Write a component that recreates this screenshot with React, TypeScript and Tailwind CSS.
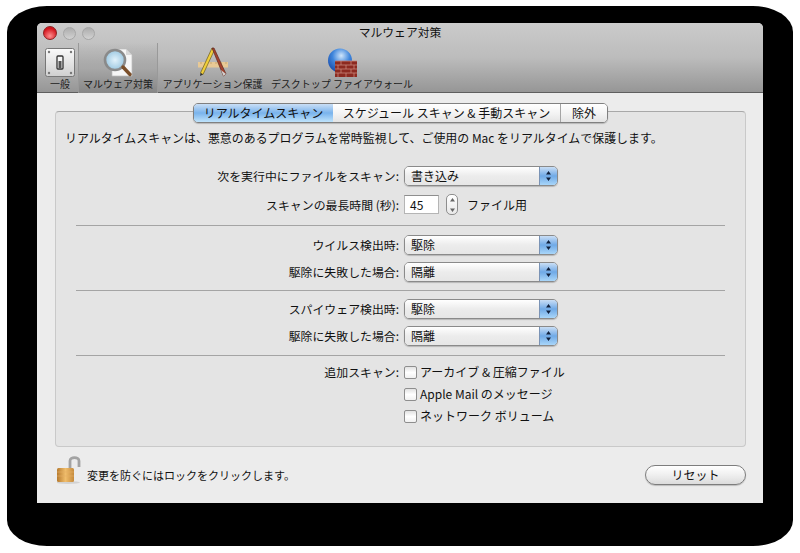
const jp = "font-['Noto_Sans_CJK_JP',sans-serif]";

function ToolbarItem({ label, width, active, children }: { label: string; width: string; active?: boolean; children: React.ReactNode }) {
  return (
    <div
      className={`flex flex-col items-center ${width} ${
        active
          ? 'mt-[20px] h-[50px] pt-[4px] bg-gradient-to-b from-transparent via-[#a8a8a8] to-[#868686] border-x border-[#999999]'
          : 'h-[70px] pt-[24px]'
      }`}
    >
      <div className="h-[31px] flex items-center justify-center">{children}</div>
      <span className="text-[10px] leading-[12px] whitespace-nowrap text-[#1c1c1c]">{label}</span>
    </div>
  );
}

function GeneralIcon() {
  return (
    <svg width="30" height="30" viewBox="0 0 30 30">
      <defs>
        <linearGradient id="plate" x1="0" y1="0" x2="0" y2="1">
          <stop offset="0" stopColor="#fafafa" />
          <stop offset="1" stopColor="#cfcfcf" />
        </linearGradient>
      </defs>
      <rect x="0.5" y="0.5" width="29" height="28" rx="2" fill="url(#plate)" stroke="#777" />
      <circle cx="4" cy="4" r="1.2" fill="#777" />
      <circle cx="26" cy="4" r="1.2" fill="#777" />
      <circle cx="4" cy="25" r="1.2" fill="#777" />
      <circle cx="26" cy="25" r="1.2" fill="#777" />
      <rect x="12" y="8" width="6" height="13" rx="1" fill="#f4f4f4" stroke="#333" strokeWidth="1.3" />
      <rect x="13.5" y="13" width="3" height="7" fill="#555" />
    </svg>
  );
}

function ScanIcon() {
  return (
    <svg width="32" height="31" viewBox="0 0 32 31">
      <defs>
        <radialGradient id="lens" cx="0.5" cy="0.5" r="0.6">
          <stop offset="0" stopColor="#e2f2fb" />
          <stop offset="1" stopColor="#8fc0dc" />
        </radialGradient>
      </defs>
      <path d="M10 2 H24 L30 8 V29 H10 Z" fill="#f6f6f6" stroke="#bbb" strokeWidth="0.7" />
      <path d="M24 2 V8 H30 Z" fill="#d8d8d8" />
      <circle cx="13" cy="13" r="10" fill="url(#lens)" stroke="#8a8a8a" strokeWidth="2.6" />
      <path d="M21 20 L28 27.5" stroke="#7b4f2a" strokeWidth="3.4" strokeLinecap="round" />
    </svg>
  );
}

function AppIcon() {
  return (
    <svg width="32" height="31" viewBox="0 0 32 31">
      <rect x="1" y="15" width="30" height="5.5" fill="#e8c995" />
      <path d="M4 15 V17 M9 15 V17 M14 15 V17 M19 15 V17 M24 15 V17 M29 15 V17" stroke="#b4925a" strokeWidth="0.6" />
      <path d="M15 1 L3.5 26 L6 27.5 L17 4 Z" fill="#f1cf3a" stroke="#6b5a1c" strokeWidth="0.7" />
      <path d="M3.5 26 L3 29 L6 27.5 Z" fill="#333" />
      <path d="M15 1 L17 1 L29 27 L26.5 29 Z" fill="#a5412c" stroke="#5c2a1e" strokeWidth="0.7" />
      <path d="M24 23 L29 27 L26.5 29 Z" fill="#cfcfcf" />
    </svg>
  );
}

function FirewallIcon() {
  return (
    <svg width="31" height="32" viewBox="0 0 31 32">
      <defs>
        <radialGradient id="globe" cx="0.55" cy="0.3" r="0.8">
          <stop offset="0" stopColor="#cfe5fb" />
          <stop offset="0.45" stopColor="#3f86dc" />
          <stop offset="1" stopColor="#103f9f" />
        </radialGradient>
      </defs>
      <circle cx="13" cy="13.5" r="12" fill="url(#globe)" />
      <rect x="8" y="14" width="22" height="16" fill="#8c2a20" />
      <path
        d="M8 14 H30 M8 18 H30 M8 22 H30 M8 26 H30 M14 14 V18 M24 14 V18 M11 18 V22 M19 18 V22 M27 18 V22 M14 22 V26 M24 22 V26 M11 26 V30 M19 26 V30 M27 26 V30"
        stroke="#c8877a"
        strokeWidth="0.8"
        fill="none"
      />
    </svg>
  );
}

function LockIcon() {
  return (
    <svg width="25" height="29" viewBox="0 0 25 29">
      <defs>
        <linearGradient id="brass" x1="0" y1="0" x2="1" y2="0">
          <stop offset="0" stopColor="#b67a2e" />
          <stop offset="0.5" stopColor="#f0bd6b" />
          <stop offset="1" stopColor="#c58a3c" />
        </linearGradient>
      </defs>
      <ellipse cx="11" cy="26.5" rx="12" ry="1.5" fill="#d2d2d2" />
      <path d="M13 13 V5 C13 0.5 22 0.5 22 5 V11" fill="none" stroke="#a3a3a3" strokeWidth="2.8" />
      <rect x="0" y="12" width="17" height="14" rx="1.5" fill="url(#brass)" />
      <path d="M0 16 H17 M0 20 H17" stroke="#e5b066" strokeWidth="0.6" />
    </svg>
  );
}

function Arrows({ color, tall }: { color: string; tall?: boolean }) {
  return tall ? (
    <svg width="7" height="16" viewBox="0 0 7 16">
      <path d="M3.5 1 L6 4.5 H1 Z M3.5 15 L6 11.5 H1 Z" fill={color} />
    </svg>
  ) : (
    <svg width="7" height="12" viewBox="0 0 7 12">
      <path d="M3.5 1 L6 4.5 H1 Z M3.5 11 L6 7.5 H1 Z" fill={color} />
    </svg>
  );
}

function Select({ value }: { value: string }) {
  return (
    <div className="flex w-[154px] h-[20px] rounded-[5px] border border-[#8a8a8a] overflow-hidden shadow-[0_1px_1px_rgba(0,0,0,0.2)]">
      <div className="flex-1 pl-[6px] text-[12px] leading-[17px] bg-gradient-to-b from-white via-[#ececec] to-[#e6e6e6] text-[#111]">
        {value}
      </div>
      <div className="w-[18px] flex items-center justify-center bg-gradient-to-b from-[#c9def5] via-[#6fa9e6] to-[#a9d6f9] border-l border-[#7a93b5]">
        <Arrows color="#10203c" />
      </div>
    </div>
  );
}

function Row({ label, className, children }: { label?: string; className: string; children: React.ReactNode }) {
  return (
    <div className={`flex items-center ${className}`}>
      <div className="w-[344px] pr-[1px] text-right text-[11.9px] leading-[16px] whitespace-nowrap text-[#111]">{label}</div>
      <div className="ml-[4px] flex items-center">{children}</div>
    </div>
  );
}

function Check({ label, className }: { label: string; className: string }) {
  return (
    <div className={`flex items-center h-[16px] ${className}`}>
      <span className="w-[13px] h-[13px] rounded-[2px] border border-[#8e8e8e] bg-gradient-to-b from-[#e2e2e2] via-white to-[#f1f1f1] shrink-0" />
      <span className="ml-[3px] text-[12px] leading-[16px] whitespace-nowrap text-[#111]">{label}</span>
    </div>
  );
}

function Divider({ className }: { className: string }) {
  return <div className={`ml-[20px] w-[649px] h-[1px] bg-[#a4a4a4] ${className}`} />;
}

export default function App() {
  return (
    <div className={`w-[800px] h-[553px] bg-white pt-[6px] pl-[7px] ${jp}`}>
      <div className="w-[786px] h-[540px] bg-black rounded-[40px/26px] pt-[17px] pl-[30px]">
        <div className="w-[726px] h-[480px] flex flex-col bg-[#ececec] rounded-t-[5px]">
          {/* Title bar and toolbar */}
          <div className="relative h-[70px] rounded-t-[5px] bg-gradient-to-b from-[#cbcbcb] via-[#bcbcbc] to-[#969696] border-b border-[#5f5f5f] pl-[8px] flex">
            <div className="absolute left-[6px] top-[3px] flex items-center gap-[6px]">
              <span className="w-[14px] h-[14px] rounded-full bg-[radial-gradient(circle_at_50%_75%,#ff8f8f,#d3141c_70%)] border border-[#8c2020]" />
              <span className="w-[13px] h-[13px] rounded-full bg-gradient-to-b from-[#adadad] to-[#d2d2d2] border border-[#a6a6a6]" />
              <span className="w-[13px] h-[13px] rounded-full bg-gradient-to-b from-[#adadad] to-[#d2d2d2] border border-[#a6a6a6]" />
            </div>
            <div className="absolute inset-x-0 top-0 text-center text-[11.8px] leading-[17px] text-[#111]">マルウェア対策</div>
            <ToolbarItem label="一般" width="w-[30px]">
              <GeneralIcon />
            </ToolbarItem>
            <div className="w-[3px]" />
            <ToolbarItem label="マルウェア対策" width="w-[80px]" active>
              <ScanIcon />
            </ToolbarItem>
            <div className="w-[4px]" />
            <ToolbarItem label="アプリケーション保護" width="w-[101px]">
              <AppIcon />
            </ToolbarItem>
            <div className="w-[8px]" />
            <ToolbarItem label="デスクトップ ファイアウォール" width="w-[142px]">
              <FirewallIcon />
            </ToolbarItem>
          </div>

          {/* Tabs and panel */}
          <div className="relative mt-[18px] ml-[18px] w-[691px] h-[336px] rounded-[4px] bg-[#e4e4e4] border border-[#c9c9c9] border-t-[#a8a8a8]">
            <div className="absolute -top-[9px] left-[137px] flex h-[20px] w-[415px] rounded-[5px] border border-[#808080] overflow-hidden text-[12px] leading-[18px] text-[#111] text-center shadow-[0_1px_1px_rgba(0,0,0,0.2)]">
              <div className="w-[139px] bg-gradient-to-b from-[#c9def5] via-[#79b3ec] to-[#bfe3fb]">リアルタイムスキャン</div>
              <div className="w-[228px] whitespace-nowrap bg-gradient-to-b from-white via-[#f4f4f4] to-[#e4e4e4] border-r border-[#a5a5a5]">
                スケジュール スキャン &amp; 手動スキャン
              </div>
              <div className="flex-1 bg-gradient-to-b from-white via-[#f4f4f4] to-[#e4e4e4]">除外</div>
            </div>

            <p className="pt-[18px] pl-[9px] text-[11.95px] leading-[16px] whitespace-nowrap text-[#111]">
              リアルタイムスキャンは、悪意のあるプログラムを常時監視して、ご使用の Mac をリアルタイムで保護します。
            </p>

            <Row label="次を実行中にファイルをスキャン:" className="mt-[20px]">
              <Select value="書き込み" />
            </Row>
            <Row label="スキャンの最長時間 (秒):" className="mt-[8px]">
              <div className="w-[35px] h-[19px] bg-white border border-[#b5b5b5] border-t-[#8e8e8e] pl-[5px] text-[12px] leading-[18px] text-[#111]">45</div>
              <div className="ml-[7px] w-[12px] h-[21px] rounded-[5px] border border-[#8e8e8e] bg-gradient-to-b from-white to-[#e8e8e8] flex items-center justify-center">
                <Arrows color="#666" tall />
              </div>
              <span className="ml-[9px] text-[12px] leading-[16px] text-[#111]">ファイル用</span>
            </Row>

            <Divider className="mt-[10px]" />
            <Row label="ウイルス検出時:" className="mt-[9px]">
              <Select value="駆除" />
            </Row>
            <Row label="駆除に失敗した場合:" className="mt-[7px]">
              <Select value="隔離" />
            </Row>

            <Divider className="mt-[8px]" />
            <Row label="スパイウェア検出時:" className="mt-[8px]">
              <Select value="駆除" />
            </Row>
            <Row label="駆除に失敗した場合:" className="mt-[7px]">
              <Select value="隔離" />
            </Row>

            <Divider className="mt-[9px]" />
            <Row label="追加スキャン:" className="mt-[8px]">
              <Check label="アーカイブ & 圧縮ファイル" className="" />
            </Row>
            <Check label="Apple Mail のメッセージ" className="mt-[6px] ml-[348px]" />
            <Check label="ネットワーク ボリューム" className="mt-[6px] ml-[348px]" />
          </div>

          {/* Footer */}
          <div className="flex items-center mt-[9px] ml-[20px] mr-[17px]">
            <LockIcon />
            <span className="ml-[5px] mt-[8px] text-[11px] leading-[16px] text-[#111]">変更を防ぐにはロックをクリックします。</span>
            <div className="ml-auto mt-[9px] w-[101px] h-[20px] rounded-full border border-[#7d7d7d] bg-gradient-to-b from-white via-[#efefef] to-[#dcdcdc] text-center text-[12px] leading-[17px] text-[#111] shadow-[0_1px_1px_rgba(0,0,0,0.2)]">
              リセット
            </div>
          </div>
        </div>
      </div>
    </div>
  );
}
